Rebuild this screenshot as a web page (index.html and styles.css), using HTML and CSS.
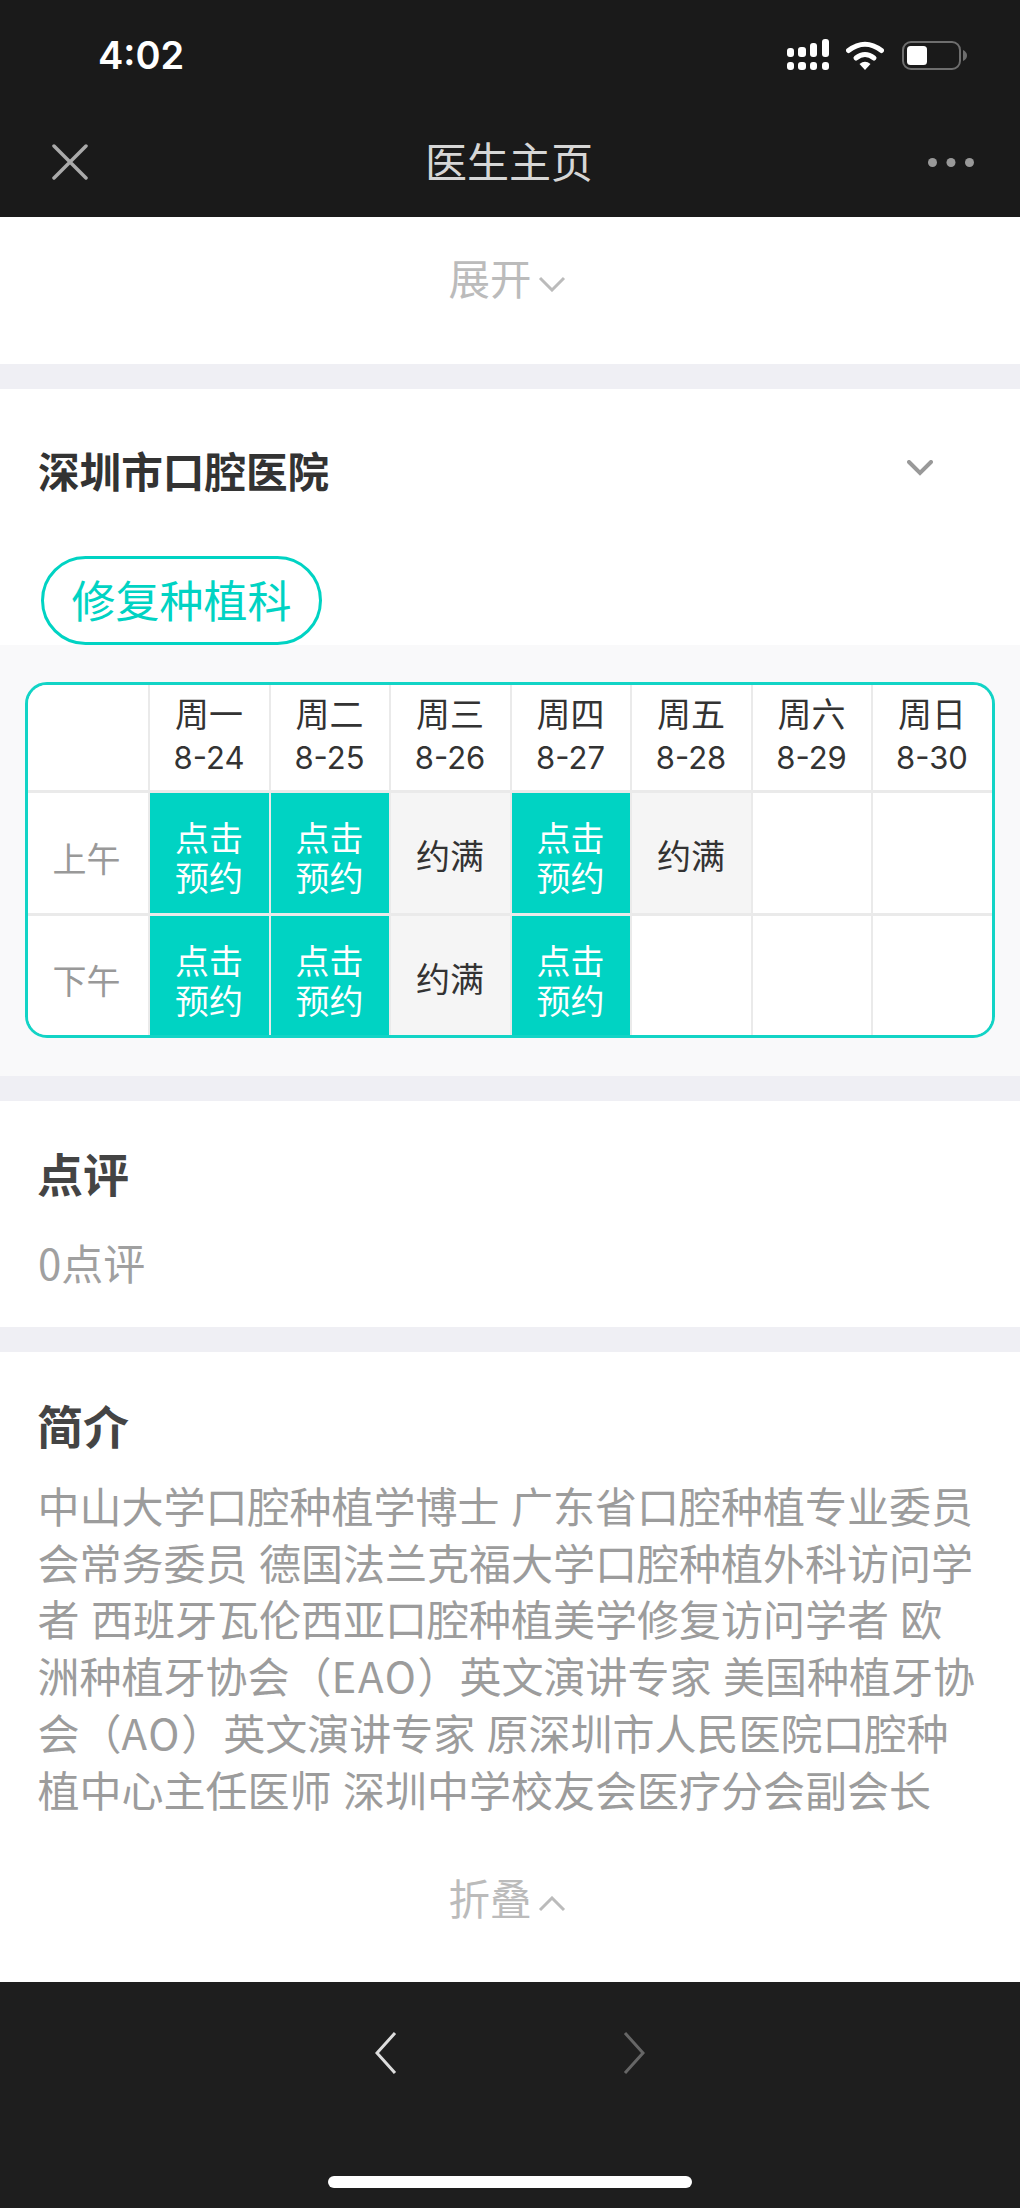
FILE: index.html
```html
<!DOCTYPE html>
<html lang="zh-CN">
<head>
<meta charset="utf-8">
<title>医生主页</title>
<link rel="stylesheet" href="styles.css">
</head>
<body>
<div class="phone">
  <header class="topbar">
    <div class="status">
      <span class="clock">4:02</span>
      <div class="status-icons">
        <svg class="signal" viewBox="0 0 42 31" fill="#fff">
          <rect x="0" y="9" width="7" height="9" rx="3"/>
          <rect x="11" y="8" width="8" height="10" rx="3"/>
          <rect x="23" y="4" width="7" height="14" rx="3"/>
          <rect x="35" y="0" width="7" height="18" rx="3"/>
          <rect x="0" y="23" width="7" height="8" rx="3"/>
          <rect x="11" y="23" width="8" height="8" rx="3"/>
          <rect x="23" y="23" width="7" height="8" rx="3"/>
          <rect x="35" y="23" width="7" height="8" rx="3"/>
        </svg>
        <svg class="wifi" viewBox="0 0 38 29">
          <path d="M2.500 9.500Q19 -3 35.500 9.500" fill="none" stroke="#fff" stroke-width="5" stroke-linecap="round"/>
          <path d="M10 17Q19 10 28 17" fill="none" stroke="#fff" stroke-width="5" stroke-linecap="round"/>
          <path d="M13.500 23Q19 18.500 24.500 23L19 29Z" fill="#fff"/>
        </svg>
        <svg class="battery" viewBox="0 0 66 29">
          <rect x="1" y="1" width="57" height="27" rx="8" fill="none" stroke="#6e6e6e" stroke-width="2"/>
          <rect x="5" y="5" width="20" height="19" rx="3.500" fill="#fff"/>
          <path d="M61 9Q65 11 65 14.500Q65 18 61 20Z" fill="#6e6e6e"/>
        </svg>
      </div>
    </div>
    <nav class="nav">
      <svg class="nav-close" viewBox="0 0 36 36"><path d="M2 2L34 34M34 2L2 34"/></svg>
      <h1 class="nav-title">医生主页</h1>
      <svg class="nav-more" viewBox="0 0 46 9" fill="#999"><circle cx="4.500" cy="4.500" r="4.500"/><circle cx="23" cy="4.500" r="4.500"/><circle cx="41.500" cy="4.500" r="4.500"/></svg>
    </nav>
  </header>

  <main>
    <section class="toggle-row toggle-row-top">
      <span>展开</span>
      <svg class="toggle-icon" viewBox="0 0 28 16"><path d="M2 2L14 14L26 2"/></svg>
    </section>

    <section class="clinic">
      <div class="clinic-head">
        <h2 class="clinic-name">深圳市口腔医院</h2>
        <svg class="clinic-arrow" viewBox="0 0 26 16"><path d="M2 2L13 13L24 2"/></svg>
      </div>
      <span class="dept">修复种植科</span>
    </section>

    <section class="schedule">
      <div class="grid">
        <div class="cell"></div>
        <div class="cell head">周一<br><span class="date">8-24</span></div>
        <div class="cell head">周二<br><span class="date">8-25</span></div>
        <div class="cell head">周三<br><span class="date">8-26</span></div>
        <div class="cell head">周四<br><span class="date">8-27</span></div>
        <div class="cell head">周五<br><span class="date">8-28</span></div>
        <div class="cell head">周六<br><span class="date">8-29</span></div>
        <div class="cell head">周日<br><span class="date">8-30</span></div>

        <div class="cell slot">上午</div>
        <div class="cell open">点击<br>预约</div>
        <div class="cell open">点击<br>预约</div>
        <div class="cell full">约满</div>
        <div class="cell open">点击<br>预约</div>
        <div class="cell full">约满</div>
        <div class="cell"></div>
        <div class="cell"></div>

        <div class="cell slot">下午</div>
        <div class="cell open">点击<br>预约</div>
        <div class="cell open">点击<br>预约</div>
        <div class="cell full">约满</div>
        <div class="cell open">点击<br>预约</div>
        <div class="cell"></div>
        <div class="cell"></div>
        <div class="cell"></div>
      </div>
    </section>

    <section class="reviews">
      <h2 class="block-title">点评</h2>
      <p class="review-count">0点评</p>
    </section>

    <section class="intro">
      <h2 class="block-title">简介</h2>
      <p class="intro-text">中山大学口腔种植学博士 广东省口腔种植专业委员<br>会常务委员 德国法兰克福大学口腔种植外科访问学<br>者 西班牙瓦伦西亚口腔种植美学修复访问学者 欧<br>洲种植牙协会（<span class="abbr">EAO</span>）英文演讲专家 美国种植牙协<br>会（<span class="abbr">AO</span>）英文演讲专家 原深圳市人民医院口腔种<br>植中心主任医师 深圳中学校友会医疗分会副会长</p>
      <div class="toggle-row toggle-row-bottom">
        <span>折叠</span>
        <svg class="toggle-icon" viewBox="0 0 28 16"><path d="M2 14L14 2L26 14"/></svg>
      </div>
    </section>
  </main>

  <footer class="toolbar">
    <div class="toolbar-arrows">
      <svg class="arrow arrow-back" viewBox="0 0 22 42"><path d="M20 1L2 21L20 41"/></svg>
      <svg class="arrow arrow-forward" viewBox="0 0 22 42"><path d="M2 1L20 21L2 41"/></svg>
    </div>
    <div class="home-bar"></div>
  </footer>
</div>
</body>
</html>
```
FILE: styles.css
```css
* { box-sizing: border-box; }

html, body { margin: 0; padding: 0; }

body {
  font-family: "Noto Sans CJK SC", "Noto Sans", sans-serif;
  background: #fff;
  color: #333;
}

h1, h2, p { margin: 0; font-weight: inherit; font-size: inherit; }

.phone { width: 1020px; height: 2208px; overflow: hidden; display: flex; flex-direction: column; }

/* top bar */
.topbar { height: 217px; background: #1a1a1a; }

.status {
  height: 108px;
  padding: 1px 52px 0 98px;
  display: flex;
  align-items: center;
  justify-content: space-between;
}

.clock { font-family: Inter, sans-serif; font-weight: 600; font-size: 38px; color: #fff; line-height: 1; }

.status-icons { display: flex; align-items: flex-end; gap: 17px; }
.signal { width: 42px; height: 31px; }
.wifi { width: 38px; height: 29px; }
.battery { width: 66px; height: 29px; margin-left: 1px; }

.nav {
  height: 108px;
  padding: 0 46px 0 52px;
  display: flex;
  align-items: center;
}

.nav-close { width: 36px; height: 36px; }
.nav-close path { fill: none; stroke: #aaa; stroke-width: 3.5; stroke-linecap: round; }
.nav-title { flex: 1; text-align: center; font-size: 42px; line-height: 56px; color: #d6d6d6; padding: 0 0 4px 2px; }
.nav-more { width: 46px; height: 9px; }

/* expand and collapse rows */
.toggle-row {
  display: flex;
  justify-content: center;
  align-items: center;
  gap: 6px;
  padding-right: 6px;
  font-size: 41.5px;
  color: #bbb;
}

.toggle-icon { width: 28px; height: 16px; margin-top: 13px; }
.toggle-icon path { fill: none; stroke: #bbb; stroke-width: 3; }

.toggle-row-top { height: 147px; padding-bottom: 27px; }
.toggle-row-bottom { height: 160px; }

/* hospital */
.clinic { border-top: 25px solid #efeff4; }

.clinic-head {
  height: 167px;
  padding: 0 87px 0 38px;
  display: flex;
  align-items: center;
  justify-content: space-between;
}

.clinic-name { font-size: 41.6px; font-weight: 700; color: #333; line-height: 56px; margin-bottom: 6px; }
.clinic-arrow { width: 26px; height: 16px; margin-bottom: 9px; }
.clinic-arrow path { fill: none; stroke: #999; stroke-width: 4; stroke-linecap: round; }

.dept {
  display: flex;
  align-items: center;
  justify-content: center;
  width: 281px;
  height: 89px;
  margin-left: 41px;
  padding-bottom: 3px;
  border: 3px solid #00d3c3;
  border-radius: 45px;
  font-size: 44px;
  color: #00d3c3;
}

/* weekly timetable */
.schedule { background: #f9f9fa; padding: 37px 25px 38px; }

.grid {
  height: 356px;
  display: grid;
  grid-template-columns: 120px 119px 118px 119px 118px 119px 118px 1fr;
  grid-template-rows: 105px 120px 1fr;
  gap: 3px 2px;
  background: #eaeaea;
  border: 3px solid #12d4c6;
  border-radius: 22px;
  overflow: hidden;
}

.cell {
  background: #fff;
  display: flex;
  align-items: center;
  justify-content: center;
  text-align: center;
  font-size: 34px;
  line-height: 40px;
  color: #333;
}

.head { line-height: 42px; display: block; padding: 7px 1px 0 0; }
.date { font-family: Inter, sans-serif; font-size: 31px; }
.slot { color: #999; padding: 9px 3px 0 0; }
.open { background: #00d3c3; color: #fff; padding: 8px 1px 0 0; }
.full { background: #f5f5f5; padding: 4px 1px 0 0; }

/* reviews */
.reviews { border-top: 25px solid #efeff4; padding: 45px 38px 37px; }

.block-title { font-size: 46px; font-weight: 700; line-height: 52px; color: #444; margin-left: -1px; }

.review-count { margin-top: 36px; font-size: 42px; line-height: 56px; color: #a0a0a0; }

/* introduction */
.intro { border-top: 25px solid #efeff4; padding: 46px 0 5px; }
.intro .block-title { padding: 0 38px; }

.intro-text {
  margin-top: 27px;
  padding-left: 37.5px;
  font-size: 42px;
  line-height: 56.7px;
  word-spacing: 2px;
  color: #9c9c9c;
  white-space: nowrap;
}

.abbr { letter-spacing: 1.7px; }

/* bottom toolbar */
.toolbar { flex: 1; background: #1e1e1e; padding-top: 50px; display: flex; flex-direction: column; align-items: center; }

.toolbar-arrows { display: flex; gap: 226px; height: 42px; }
.arrow { width: 22px; height: 42px; }
.arrow path { fill: none; stroke-width: 3; }
.arrow-back path { stroke: #ddd; }
.arrow-forward path { stroke: #666; }

.home-bar { width: 364px; height: 12px; margin-top: 102px; border-radius: 6px; background: #fff; }
```
